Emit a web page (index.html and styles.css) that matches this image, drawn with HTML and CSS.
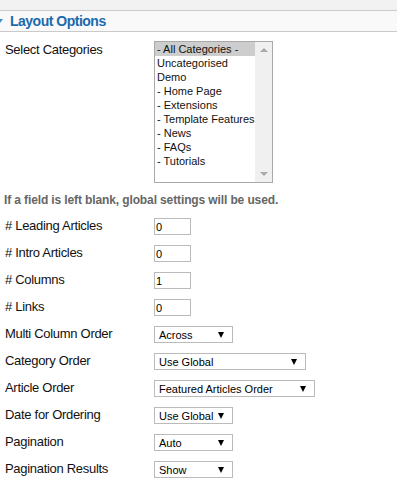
FILE: index.html
```html
<!DOCTYPE html>
<html lang="en">
<head>
    <meta charset="UTF-8">
    <meta name="viewport" content="width=device-width, initial-scale=1.0">
    <title>Layout Options</title>
    <link rel="stylesheet" href="styles.css">
</head>
<body>
    <div class="top-strip"></div>
    <div class="panel-header">
        <span class="caret"></span>
        <span>Layout Options</span>
    </div>

    <div class="panel-body">
        <div class="field field-tall">
            <label>Select Categories</label>
            <div class="listbox">
                <ul class="listbox-options">
                    <li class="selected">- All Categories -</li>
                    <li>Uncategorised</li>
                    <li>Demo</li>
                    <li>- Home Page</li>
                    <li>- Extensions</li>
                    <li>- Template Features</li>
                    <li>- News</li>
                    <li>- FAQs</li>
                    <li>- Tutorials</li>
                </ul>
                <div class="scrollbar">
                    <span class="arrow-up"></span>
                    <span class="arrow-down"></span>
                </div>
            </div>
        </div>

        <p class="note">If a field is left blank, global settings will be used.</p>

        <div class="field">
            <label for="leading"># Leading Articles</label>
            <input type="text" id="leading" class="num-input" value="0">
        </div>
        <div class="field">
            <label for="intro"># Intro Articles</label>
            <input type="text" id="intro" class="num-input" value="0">
        </div>
        <div class="field">
            <label for="columns"># Columns</label>
            <input type="text" id="columns" class="num-input" value="1">
        </div>
        <div class="field">
            <label for="links"># Links</label>
            <input type="text" id="links" class="num-input" value="0">
        </div>

        <div class="field">
            <label>Multi Column Order</label>
            <div class="dropdown dropdown-sm"><span>Across</span><span class="dd-arrow"></span></div>
        </div>
        <div class="field">
            <label>Category Order</label>
            <div class="dropdown dropdown-md"><span>Use Global</span><span class="dd-arrow"></span></div>
        </div>
        <div class="field">
            <label>Article Order</label>
            <div class="dropdown dropdown-lg"><span>Featured Articles Order</span><span class="dd-arrow"></span></div>
        </div>
        <div class="field">
            <label>Date for Ordering</label>
            <div class="dropdown dropdown-sm"><span>Use Global</span><span class="dd-arrow"></span></div>
        </div>
        <div class="field">
            <label>Pagination</label>
            <div class="dropdown dropdown-sm"><span>Auto</span><span class="dd-arrow"></span></div>
        </div>
        <div class="field">
            <label>Pagination Results</label>
            <div class="dropdown dropdown-sm"><span>Show</span><span class="dd-arrow"></span></div>
        </div>
    </div>
</body>
</html>
```

FILE: styles.css
```css
body {
    margin: 0;
    font-family: "Liberation Sans", Arial, sans-serif;
    background-color: #fff;
    color: #111;
}
.top-strip {
    height: 10px;
    background-color: #f2f2f2;
    border-bottom: 1px solid #cacaca;
}
.panel-header {
    height: 20px;
    display: flex;
    align-items: center;
    background-color: #f9f9f9;
    border-bottom: 1px solid #cacaca;
    color: #1b6aad;
    font-size: 14px;
    font-weight: bold;
    line-height: 16px;
    letter-spacing: -0.5px;
}
.caret {
    width: 0;
    height: 0;
    margin-left: -3px;
    margin-right: 7px;
    border-left: 3.5px solid transparent;
    border-right: 3.5px solid transparent;
    border-top: 4px solid #3b8fd0;
}
.panel-body {
    padding-left: 4px;
}
.field {
    display: grid;
    grid-template-columns: 150px auto;
    align-items: start;
    height: 27px;
}
.field label {
    padding: 5px 0 0 1px;
    font-size: 13px;
    line-height: 15px;
    letter-spacing: -0.3px;
}
.field-tall {
    height: auto;
    margin-top: 9px;
}
.field-tall label {
    padding-top: 1px;
}
/* Lista de categorías */
.listbox {
    width: 119px;
    height: 142px;
    box-sizing: border-box;
    border: 1px solid #a9a9a9;
    display: flex;
}
.listbox-options {
    flex: 1;
    margin: 0;
    padding: 0;
    list-style: none;
    font-size: 11px;
    line-height: 14px;
}
.listbox-options li {
    padding-left: 2px;
    white-space: nowrap;
}
.listbox-options .selected {
    background-color: #cdcdcd;
}
.scrollbar {
    width: 17px;
    background-color: #f0f0f0;
    display: flex;
    flex-direction: column;
    justify-content: space-between;
    align-items: center;
    padding: 6px 0;
    box-sizing: border-box;
}
.arrow-up,
.arrow-down {
    width: 0;
    height: 0;
    border-left: 4px solid transparent;
    border-right: 4px solid transparent;
}
.arrow-up {
    border-bottom: 4px solid #a8a8a8;
}
.arrow-down {
    border-top: 4px solid #a8a8a8;
}
.note {
    margin: 10px 0 6px;
    color: #666;
    font-size: 12px;
    font-weight: bold;
    line-height: 14px;
    letter-spacing: -0.12px;
}
.num-input {
    margin-top: 5px;
    width: 37px;
    height: 17px;
    box-sizing: border-box;
    border: 1px solid #bbb;
    padding: 0 1px;
    font-family: "Liberation Sans", Arial, sans-serif;
    font-size: 11px;
    color: #000;
}
.dropdown {
    margin-top: 5px;
    height: 17px;
    box-sizing: border-box;
    border: 1px solid #bbb;
    padding: 0 8px 0 4px;
    display: flex;
    align-items: center;
    justify-content: space-between;
    font-size: 11px;
    color: #000;
}
.dropdown-sm { width: 79px; }
.dropdown-md { width: 152px; }
.dropdown-lg { width: 161px; }
.dd-arrow {
    width: 0;
    height: 0;
    border-left: 3px solid transparent;
    border-right: 3px solid transparent;
    border-top: 6px solid #000;
}
```
